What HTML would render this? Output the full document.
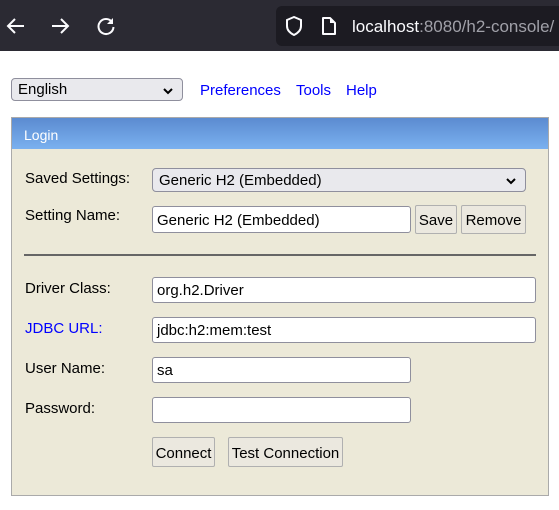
<!DOCTYPE html>
<html><head><meta charset="utf-8"><style>
*{box-sizing:border-box;margin:0;padding:0}
body{width:559px;height:510px;background:#fff;font-family:"Liberation Sans",Arial,sans-serif;font-size:15px;color:#000;position:relative;overflow:hidden}
.a{position:absolute}
.bar{left:0;top:0;width:559px;height:51px;background:#2b2a33}
.url{left:276px;top:6px;width:290px;height:40px;background:#1c1b22;border-radius:6px}
.sel{background:#e9e9ed;border:1px solid #8f8f9d;border-radius:4px;padding-left:6px;line-height:23px}
.inp{background:#fff;border:1px solid #8f8f9d;border-radius:3px;padding-left:4px;line-height:25px}
.btn{background:#ebe8df;border:1px solid #b0b0b0;border-radius:2px;text-align:center;line-height:29px}
.lbl{left:25px}
.chev{position:absolute;right:8px;top:6px}
</style></head><body>
<div class="a bar"></div>
<svg class="a" style="left:6px;top:16px" width="20" height="20" viewBox="0 0 20 20"><path d="M18 10H3M9 3l-7 7 7 7" stroke="#fbfbfe" stroke-width="2" fill="none"/></svg>
<svg class="a" style="left:50px;top:16px" width="20" height="20" viewBox="0 0 20 20"><path d="M2 10h15M11 3l7 7-7 7" stroke="#fbfbfe" stroke-width="2" fill="none"/></svg>
<svg class="a" style="left:96px;top:16px" width="20" height="20" viewBox="0 0 20 20"><path d="M16 6A7.5 7.5 0 1 0 17.5 11" stroke="#fbfbfe" stroke-width="2" fill="none"/><path d="M17 2v6h-6z" fill="#fbfbfe"/></svg>
<div class="a url"></div>
<svg class="a" style="left:285px;top:16px" width="18" height="20" viewBox="0 0 18 20"><path d="M9 1L2 4v6c0 4 3 7 7 9 4-2 7-5 7-9V4z" stroke="#fbfbfe" stroke-width="2" fill="none"/></svg>
<svg class="a" style="left:321px;top:16px" width="16" height="20" viewBox="0 0 16 20"><path d="M2 2h7l5 5v11H2z" stroke="#fbfbfe" stroke-width="2" fill="none" stroke-linejoin="round"/><path d="M9 2v5h5" fill="#fbfbfe"/></svg>
<div class="a" style="left:352px;top:17px;font-size:17px;color:#fbfbfe">localhost<span style="color:#a0a0a8">:8080/h2-console/</span></div>

<div class="a sel" style="left:11px;top:78px;width:172px;height:23px;line-height:22px">English<svg class="chev" width="12" height="12" viewBox="0 0 12 12"><path d="M2 4l4 4 4-4" stroke="#000" stroke-width="2" fill="none"/></svg></div>
<div class="a" style="left:200px;top:82px;color:#00f">Preferences</div>
<div class="a" style="left:296px;top:82px;color:#00f">Tools</div>
<div class="a" style="left:346px;top:82px;color:#00f">Help</div>

<div class="a" style="left:11px;top:117px;width:538px;height:379px;background:#ece9d8;border:1px solid #aaa"></div>
<div class="a" style="left:12px;top:118px;width:536px;height:31px;background:linear-gradient(#5b8bd0,#7ab1ef);color:#fff;padding:9px 0 0 12px;font-size:14px">Login</div>

<div class="a lbl" style="top:170px">Saved Settings:</div>
<div class="a sel" style="left:152px;top:168px;width:374px;height:24px">Generic H2 (Embedded)<svg class="chev" width="12" height="12" viewBox="0 0 12 12"><path d="M2 4l4 4 4-4" stroke="#000" stroke-width="2" fill="none"/></svg></div>
<div class="a lbl" style="top:207px">Setting Name:</div>
<div class="a inp" style="left:152px;top:206px;width:259px;height:27px;line-height:27px">Generic H2 (Embedded)</div>
<div class="a btn" style="left:415px;top:205px;width:42px;height:29px">Save</div>
<div class="a btn" style="left:461px;top:205px;width:65px;height:29px">Remove</div>
<div class="a" style="left:24px;top:254px;width:512px;height:2px;background:#666"></div>

<div class="a lbl" style="top:280px">Driver Class:</div>
<div class="a inp" style="left:152px;top:277px;width:384px;height:26px">org.h2.Driver</div>
<div class="a lbl" style="top:320px;color:#00f">JDBC URL:</div>
<div class="a inp" style="left:152px;top:317px;width:384px;height:26px">jdbc:h2:mem:test</div>
<div class="a lbl" style="top:360px">User Name:</div>
<div class="a inp" style="left:152px;top:357px;width:259px;height:26px">sa</div>
<div class="a lbl" style="top:400px">Password:</div>
<div class="a inp" style="left:152px;top:397px;width:259px;height:26px"></div>
<div class="a btn" style="left:152px;top:437px;width:63px;height:30px;line-height:31px">Connect</div>
<div class="a btn" style="left:228px;top:437px;width:115px;height:30px;line-height:31px">Test Connection</div>
</body></html>
